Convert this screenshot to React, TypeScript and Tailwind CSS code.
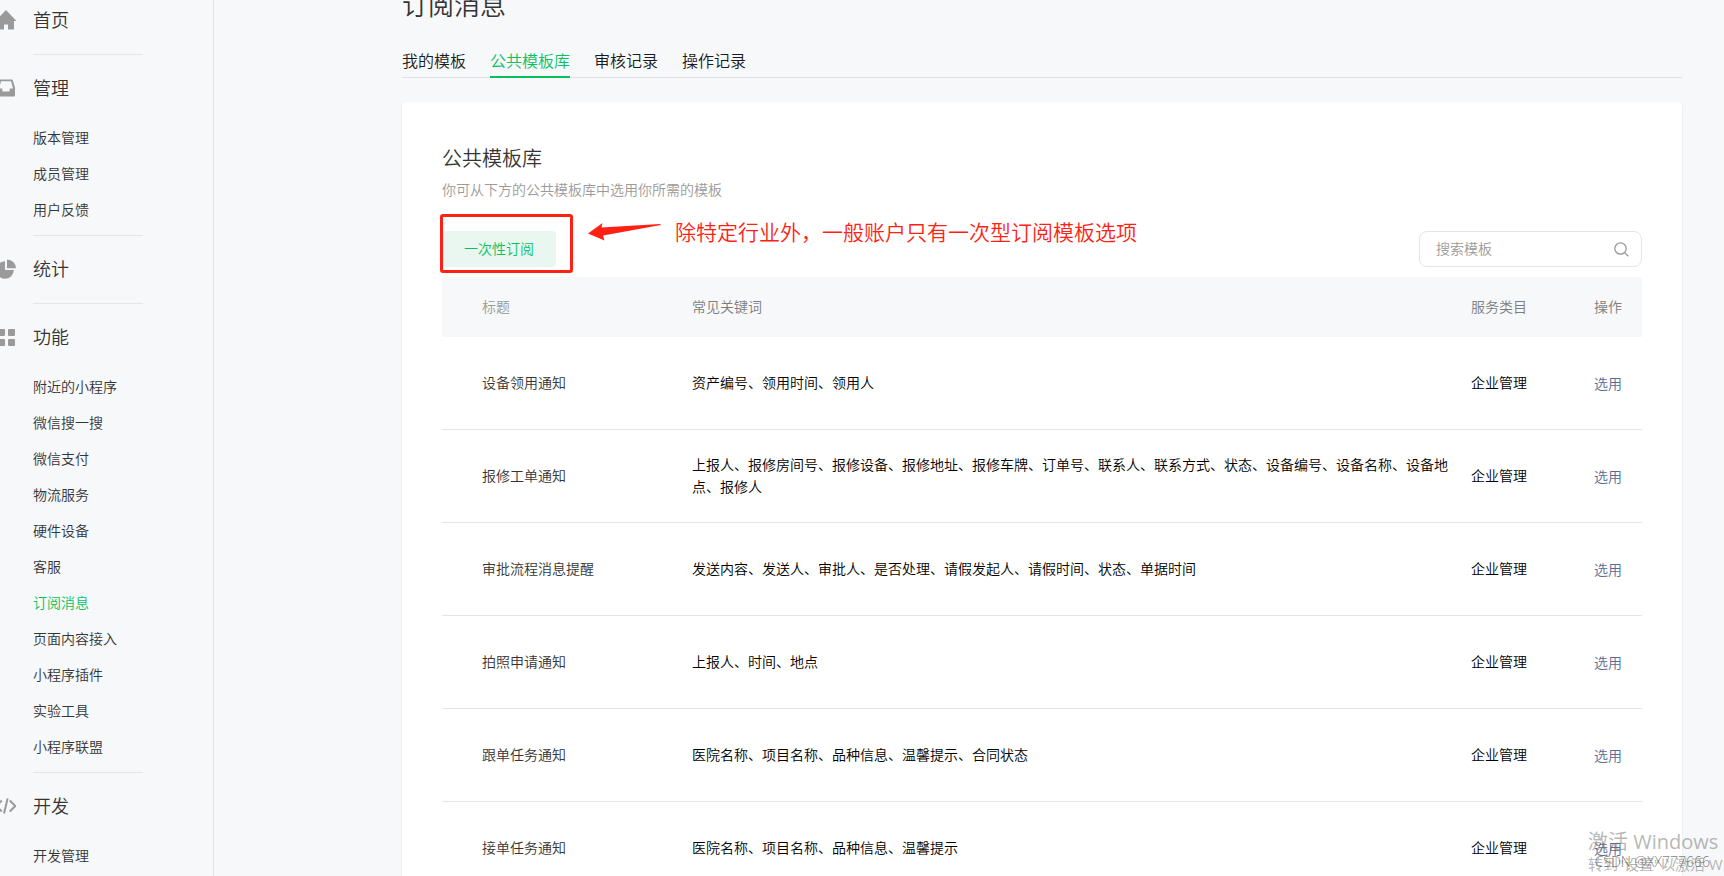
import type { ReactNode } from "react";

const HomeIcon = () => (
  <svg width="20" height="20" viewBox="0 0 20 20" fill="#9a9a9a">
    <path d="M10 0 20 10.5V11H18V19.500H12V14.500H8V19.500H2V11H0V10.500Z" />
  </svg>
);

const InboxIcon = () => (
  <svg width="20" height="20" viewBox="0 0 20 20" fill="#9a9a9a" fillRule="evenodd">
    <path d="M4.200 1.500H15.800a1 1 0 0 1 1 .8L19 9.500V17.500a1 1 0 0 1-1 1H2a1 1 0 0 1-1-1V9.500L3.200 2.300a1 1 0 0 1 1-.8ZM5 3.300 3 10.500H6.300V12.500a1 1 0 0 0 1 1H12.700a1 1 0 0 0 1-1V10.500H17L15 3.300Z" />
  </svg>
);

const ChartIcon = () => (
  <svg width="20" height="20" viewBox="0 0 20 20" fill="#9a9a9a">
    <path d="M9 2.200V11H17.800A8.800 8.800 0 1 1 9 2.200Z" />
    <path d="M11 .5A9 9 0 0 1 20 9.300H11Z" />
  </svg>
);

const GridIcon = () => (
  <svg width="20" height="20" viewBox="0 0 20 20" fill="#9a9a9a">
    <rect x="2" y="2" width="7" height="7" rx="1" />
    <rect x="12" y="2" width="7" height="7" rx="1" />
    <rect x="2" y="12" width="7" height="7" rx="1" />
    <rect x="12" y="12" width="7" height="7" rx="1" />
  </svg>
);

const CodeIcon = () => (
  <svg width="24" height="20" viewBox="0 0 24 20" className="shrink-0" fill="none" stroke="#9a9a9a" strokeWidth="2">
    <path d="M9.800 4.500 4.300 10 9.800 15.500M17.800 4.500 23.300 10 17.800 15.500M15.600 2.500 12 17.500" />
  </svg>
);

type Section = { title: string; icon: ReactNode; items: string[] };

const sections: Section[] = [
  { title: "首页", icon: <HomeIcon />, items: [] },
  { title: "管理", icon: <InboxIcon />, items: ["版本管理", "成员管理", "用户反馈"] },
  { title: "统计", icon: <ChartIcon />, items: [] },
  {
    title: "功能",
    icon: <GridIcon />,
    items: [
      "附近的小程序",
      "微信搜一搜",
      "微信支付",
      "物流服务",
      "硬件设备",
      "客服",
      "订阅消息",
      "页面内容接入",
      "小程序插件",
      "实验工具",
      "小程序联盟",
    ],
  },
  { title: "开发", icon: <CodeIcon />, items: ["开发管理"] },
];

const tabs = ["我的模板", "公共模板库", "审核记录", "操作记录"];

const rows = [
  { title: "设备领用通知", keywords: "资产编号、领用时间、领用人" },
  {
    title: "报修工单通知",
    keywords:
      "上报人、报修房间号、报修设备、报修地址、报修车牌、订单号、联系人、联系方式、状态、设备编号、设备名称、设备地点、报修人",
  },
  {
    title: "审批流程消息提醒",
    keywords: "发送内容、发送人、审批人、是否处理、请假发起人、请假时间、状态、单据时间",
  },
  { title: "拍照申请通知", keywords: "上报人、时间、地点" },
  { title: "跟单任务通知", keywords: "医院名称、项目名称、品种信息、温馨提示、合同状态" },
  { title: "接单任务通知", keywords: "医院名称、项目名称、品种信息、温馨提示" },
];

function Sidebar() {
  return (
    <aside className="w-[214px] shrink-0 border-r border-[#e4e5e7] pl-[33px]">
      <nav className="-mt-[13px]">
        {sections.map((section) => (
          <section
            key={section.title}
            className="w-[110px] border-b border-[#e4e5e7] pt-[18px] last:border-b-0"
          >
            <a href="#" className="flex h-7 items-center text-lg text-[#353535]">
              <span className="-ml-[37px] flex w-[37px] justify-start pt-0.5">
                <span className="flex w-5 shrink-0 justify-end">{section.icon}</span>
              </span>
              {section.title}
            </a>
            {section.items.length > 0 ? (
              <ul className="mt-[18px] pb-2">
                {section.items.map((item) => (
                  <li key={item}>
                    <a
                      href="#"
                      className={`block text-sm leading-9 ${
                        item === "订阅消息" ? "text-[#07c160]" : "text-[#353535]"
                      }`}
                    >
                      {item}
                    </a>
                  </li>
                ))}
              </ul>
            ) : (
              <div className="h-[21px]" />
            )}
          </section>
        ))}
      </nav>
    </aside>
  );
}

function Annotation() {
  return (
    <div className="pointer-events-none absolute -left-0.5 -top-[17px] flex items-start">
      <div className="h-[59px] w-[133px] shrink-0 rounded-[3px] border-3 border-[#ff2214]" />
      <svg className="ml-[15px] mt-[9px] shrink-0" width="73" height="18" viewBox="0 0 73 18" fill="#ff2214">
        <path d="M0 10.500 14.500 0 13.500 4.500 72 1 73 2 15 12.500 16.500 17.500Z" />
      </svg>
      <p className="ml-[14px] mt-0.5 whitespace-nowrap text-[21px] leading-[30px] text-[#ff2214]">
        除特定行业外，一般账户只有一次型订阅模板选项
      </p>
    </div>
  );
}

function TemplateTable() {
  return (
    <table className="mt-[10px] w-full table-fixed border-separate border-spacing-0 text-left text-sm">
      <colgroup>
        <col className="w-[250px]" />
        <col />
        <col className="w-[123px]" />
        <col className="w-12" />
      </colgroup>
      <thead>
        <tr className="h-[60px] bg-[#f6f8f9] text-[#7d7d7d]">
          <th className="pb-0.5 pl-10 font-[350] text-[#9a9a9a]">标题</th>
          <th className="pb-0.5 font-[350]">常见关键词</th>
          <th className="pb-0.5 font-[350]">服务类目</th>
          <th className="pb-0.5 font-[350]">操作</th>
        </tr>
      </thead>
      <tbody>
        {rows.map((row) => (
          <tr key={row.title} className="h-[93px] leading-[22px] text-black">
            <td className="border-b border-[#e4e5e7] pb-0.5 pl-10 text-[#353535]">{row.title}</td>
            <td className="border-b border-[#e4e5e7] pb-0.5 pr-5">{row.keywords}</td>
            <td className="border-b border-[#e4e5e7] pb-0.5">企业管理</td>
            <td className="border-b border-[#e4e5e7]">
              <a href="#" className="text-[#576b95]">
                选用
              </a>
            </td>
          </tr>
        ))}
      </tbody>
    </table>
  );
}

export default function App() {
  return (
    <div className="relative flex h-screen overflow-hidden bg-[#f7f8fa] font-['Noto_Sans_CJK_SC',sans-serif] font-[350]">
      <Sidebar />
      <main className="min-w-0 flex-1 pl-[188px] pr-[42px]">
        <h1 className="-mt-[14px] text-[26px] leading-9 font-[350] text-[#353535]">订阅消息</h1>
        <nav className="mt-[26px] flex gap-6 border-b border-[#dfe0e2]">
          {tabs.map((tab) => (
            <a
              key={tab}
              href="#"
              className={`-mb-px border-b-2 pb-1 text-base leading-6 ${
                tab === "公共模板库"
                  ? "border-[#07c160] text-[#07c160]"
                  : "border-transparent text-[#1a1b1c]"
              }`}
            >
              {tab}
            </a>
          ))}
        </nav>
        <div className="mt-6 rounded bg-white px-10 pt-10 shadow-[0_1px_2px_rgba(0,0,0,0.12)]">
          <h2 className="text-xl leading-8 font-[350] text-[#353535]">公共模板库</h2>
          <p className="mt-[3px] text-sm leading-6 text-[#9a9a9a]">你可从下方的公共模板库中选用你所需的模板</p>
          <div className="relative mt-[30px] flex items-center justify-between">
            <button className="h-9 rounded bg-[#eaf7f0] px-[22px] pb-0.5 text-sm text-[#07c160]">
              一次性订阅
            </button>
            <label className="flex h-9 w-[223px] items-center rounded-lg border border-[#e4e5e7] pl-4 pr-3">
              <input
                type="text"
                aria-label="搜索模板"
                placeholder="搜索模板"
                className="min-w-0 flex-1 pb-0.5 text-sm outline-none placeholder:text-[#9a9a9a]"
              />
              <svg width="15" height="15" viewBox="0 0 15 15" fill="none" stroke="#9a9a9a" strokeWidth="1.300">
                <circle cx="6.500" cy="6.500" r="5.700" />
                <path d="M10.600 10.600 14.300 14.300" />
              </svg>
            </label>
            <Annotation />
          </div>
          <TemplateTable />
        </div>
      </main>
      <div className="pointer-events-none absolute left-[1588px] top-[828px] whitespace-nowrap font-['Open_Sans','Noto_Sans_CJK_SC',sans-serif] font-normal text-[#6e6e6e]/50">
        <p className="text-xl leading-7">激活 Windows</p>
        <p className="text-[15px] leading-4">转到"设置"以激活 Windows。</p>
      </div>
      <p className="pointer-events-none absolute bottom-1 right-[14px] font-['Open_Sans',sans-serif] text-sm leading-5 text-[#555]/75">
        CSDN @XX777666
      </p>
    </div>
  );
}
